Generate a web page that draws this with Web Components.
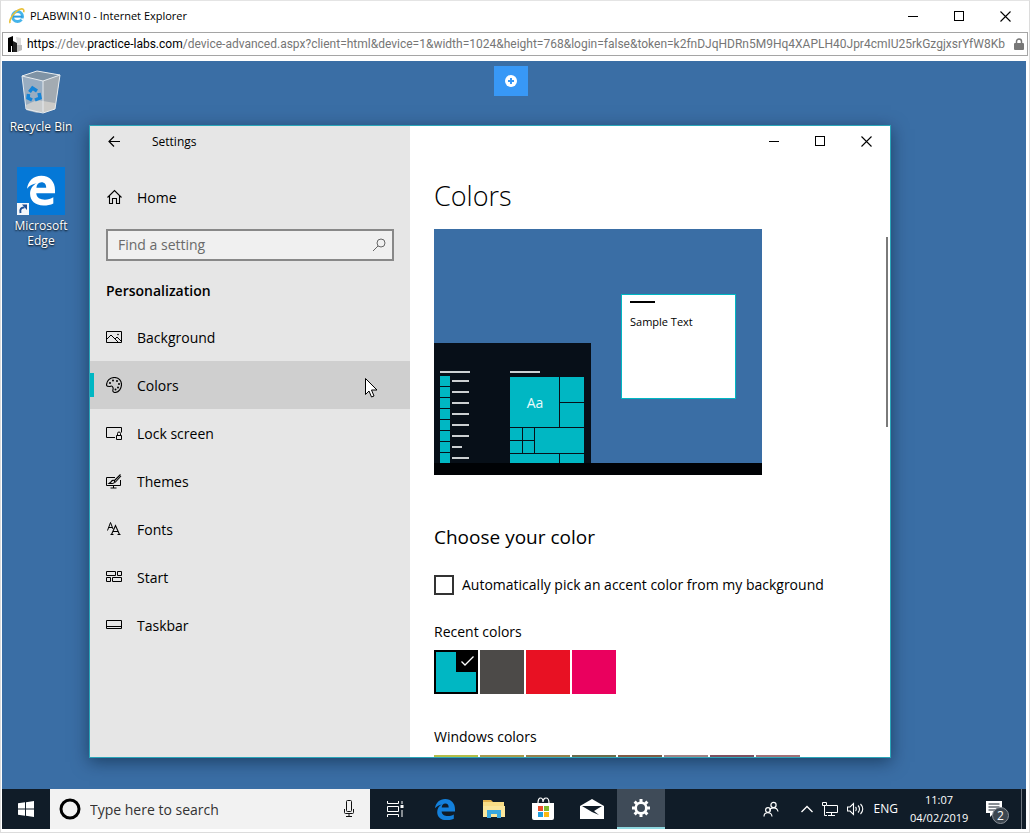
<!DOCTYPE html>
<html lang="en">
<head>
<meta charset="utf-8">
<title>PLABWIN10 - Internet Explorer</title>
<style>
  html, body { height: 100%; margin: 0; }
  body { font: 14px/20px "Open Sans", "Noto Sans", sans-serif; color: #000; background: #fff; overflow: hidden; }
</style>
</head>
<body>
<browser-window></browser-window>

<script>
const ICONS = {
  ie: [16, 16, `<circle cx="8.5" cy="8.5" r="5" fill="none" stroke="#45b4ea" stroke-width="3"/><path d="M4 8.6h9.5" stroke="#2a9be0" stroke-width="2"/><path d="M11 10.5h4l-1 2z" fill="#fff"/><path d="M1.2 15C-.6 12.500 5 3.500 11 1.200c3-1 4.500.3 3.600 3" fill="none" stroke="#e9c13b" stroke-width="1.600"/>`],
  site: [16, 16, `<path d="M1 2l5-2v16H1z" fill="#000"/><path d="M6 5l4 2v9H6z" fill="#222"/><path d="M4 10h1v6H4z" fill="#fff"/><path d="M9 1l5 1v12l-4 2V7z" fill="#dcdcdc"/><path d="M10 9h5v5l-5 2z" fill="#bbb"/>`],
  lock: [10, 12, `<path d="M2.500 6V3.500a2.500 2.500 0 015 0V6" fill="none" stroke="#777" stroke-width="1.500"/><rect y="5" width="10" height="7" rx="1" fill="#777"/>`],
  min: [11, 11, `<path d="M0 5.500h10" stroke="#000"/>`],
  max: [11, 11, `<rect x=".5" y=".5" width="9" height="9" fill="none" stroke="#000"/>`],
  close: [11, 11, `<path d="M.5.5l10 10M10.500.5l-10 10" stroke="#000" stroke-width="1.100"/>`],
  plus: [12, 12, `<circle cx="6" cy="6" r="6" fill="#fff"/><path d="M6 3v6M3 6h6" stroke="#3898f6" stroke-width="2"/>`],
  bin: [48, 48, `<path d="M5 8l15-5 23 4-5 34-18 4-11-3z" fill="#b9c3cb" fill-opacity=".75"/><path d="M5 8l15-5 23 4-17 6z" fill="#7f93a5"/><path d="M26 13l17-6-5 34-12 4z" fill="#a3abb2"/><path d="M9 37l11-5 18 3v6l-12 4-16-3z" fill="#ddd9d2" fill-opacity=".7"/><path d="M5 8l15-5 23 4-17 6zM5 8l4 33 17 4 12-4 5-34M26 13v31" fill="none" stroke="#e6ebef"/><g fill="none" stroke="#1684d6" stroke-width="3.500"><path d="M12.500 24l3-4 4.500 3"/><path d="M22 25l1 5-5 2"/><path d="M15 32l-4-2 .5-4"/></g>`],
  edgeTile: [48, 48, `<rect width="48" height="48" fill="#0478d7"/><svg x="10" y="8" width="28" height="31" viewBox="0 0 20 21"><path fill="#fff" d="M0 9.300C.7 3.700 4.700 0 10.200 0 16.300 0 20 4.300 20 10.200v2.300H6.600c.2 3.200 3 4.600 6.200 4.600 2.200 0 4.300-.7 6-1.700v4.300c-2 1-4.300 1.500-7 1.500-6 0-9.600-3.300-9.600-8.300 0-3.300 1.700-6 4.700-7.500C4.300 5.800 1.700 7 0 9.300zM6.700 8.500h7c0-2.400-1.100-3.900-3.400-3.900-2 0-3.400 1.500-3.600 3.900z"/></svg><rect y="36" width="12" height="12" fill="#f3f6fa"/><path d="M3.500 46c-1-4 1-6 4-5.500" fill="none" stroke="#1d4f96" stroke-width="2"/><path d="M5 37.500h5v5.500z" fill="#1d4f96"/>`],
  back: [12, 12, `<path d="M12 5.500H1M6 .5l-5 5 5 5" fill="none" stroke="#000" stroke-width="1.200"/>`],
  home: [16, 16, `<path d="M1.500 8.500L8.500 1.500l7 7M3.500 7v7.500h3v-5h4v5h3V7" fill="none" stroke="#000" stroke-width="1.100"/>`],
  search: [14, 14, `<circle cx="9" cy="5" r="4" fill="none" stroke="#666"/><path d="M6 8L1 13" stroke="#666"/>`],
  background: [16, 16, `<path d="M.5 2.500h15v11H.5z" fill="none" stroke="#000"/><path d="M1 10l4-4 7 7M9 10l2-2 4 4" fill="none" stroke="#000"/><circle cx="12" cy="5.500" r=".8"/>`],
  colors: [16, 16, `<path d="M3.500 9.500C2.500 9.500.5 9.500.5 8 .5 3.500 4 .5 8.500.5s7 3.500 7 7-2.500 8-6.500 8c-2 0-2.500-1.500-2-3s-.5-3.500-1.500-3.500c-.7 0-1 .5-2 .5z" fill="none" stroke="#000" stroke-width="1.100"/><g><circle cx="4" cy="6" r="1"/><circle cx="7" cy="3.500" r="1"/><circle cx="11" cy="4" r="1"/><circle cx="13" cy="7" r="1"/><circle cx="12" cy="10.500" r="1"/><circle cx="9.500" cy="12.500" r="1"/></g>`],
  lockscreen: [16, 16, `<path d="M9 12.500H.5v-10h15v5" fill="none" stroke="#000"/><path d="M10.500 10.500h5v4h-5zM11.500 10V8.500a1.500 1.500 0 013 0V10" fill="none" stroke="#000"/>`],
  themes: [16, 16, `<path d="M9 4.500H.5v8h14V7M7.500 13v2M4.500 15h6" fill="none" stroke="#000"/><path d="M14.500 1.500L8 8M15 3L9 9.500M3 10.500h3c1.500 0 3-1 2.500-2.500S5.500 7.500 5 9z" fill="none" stroke="#000" stroke-width="1.100"/>`],
  start: [16, 16, `<path d="M.5 2.500h9v4h-9zM11.500 2.500h4v4h-4zM.5 8.500h4v4h-4zM6.500 8.500h9v4h-9z" fill="none" stroke="#000"/>`],
  taskbar: [16, 16, `<path d="M.5 3.500h15v8H.5zM1 9.500h14" fill="none" stroke="#000"/>`],
  fonts: [16, 16, `<path d="M1.500 9.500L4.500 1.500 7 8M2.500 6.500h3.500" fill="none" stroke="#000"/><path d="M5.500 13.500L9.500 4.500l4 9M7 10.500h5M4.500 13.500h3M11.500 13.500h3" fill="none" stroke="#000" stroke-width="1.100"/>`],
  cursor: [13, 20, `<path d="M.5.5v16l3.500-3.500 2.500 6 2.500-1-2.500-6H12z" fill="#fff" stroke="#000"/>`],
  windows: [16, 16, `<path fill="#fff" d="M0 2.300l7-1v6.200H0zM8 1.200L16 0v7.500H8zM0 8.500h7v6.200l-7-1zM8 8.500h8V16l-8-1.200z"/>`],
  cortana: [22, 22, `<circle cx="11" cy="11" r="9" fill="none" stroke="#000" stroke-width="3"/>`],
  mic: [12, 18, `<rect x="3.500" y=".5" width="5" height="11" rx="1" fill="none" stroke="#111"/><path d="M1.500 9v3.500a1 1 0 001 1h7a1 1 0 001-1V9M6 14v3M3 16.500h6" fill="none" stroke="#111"/>`],
  taskview: [18, 16, `<path d="M.5 0v2.500h11V0M.5 16v-2.500h11V16M.5 5.500h11v5H.5zM15 0v3M15 9v7" fill="none" stroke="#fff"/><rect x="13.500" y="4" width="3" height="3" fill="#fff"/>`],
  edge: [20, 21, `<path fill="#1380dc" d="M0 9.300C.7 3.700 4.700 0 10.200 0 16.300 0 20 4.300 20 10.200v2.300H6.600c.2 3.200 3 4.600 6.200 4.600 2.200 0 4.300-.7 6-1.700v4.300c-2 1-4.300 1.500-7 1.500-6 0-9.600-3.300-9.600-8.300 0-3.300 1.700-6 4.700-7.500C4.300 5.800 1.700 7 0 9.300zM6.700 8.500h7c0-2.400-1.100-3.900-3.400-3.900-2 0-3.400 1.500-3.600 3.900z"/>`],
  folder: [22, 20, `<path d="M0 1h8l2 2h10v2H0z" fill="#e3b24d"/><path d="M0 3h21v15H0z" fill="#f9dd86"/><path d="M0 7h22v11H0z" fill="#fbe69b"/><path d="M4 11h14v8h-4v-4H8v4H4z" fill="#39a7df"/>`],
  store: [24, 24, `<path d="M7 6c0-7 5-6 5-1 0-5 6-6 6 1" fill="none" stroke="#fff" stroke-width="1.200"/><path d="M1 6h22v15a2 2 0 01-2 2H3a2 2 0 01-2-2z" fill="#fff"/><path fill="#e94e2c" d="M7 9h5v5H7z"/><path fill="#7fba2c" d="M13 9h5v5h-5z"/><path fill="#219fe0" d="M7 15h5v5H7z"/><path fill="#fbb913" d="M13 15h5v5h-5z"/>`],
  mail: [24, 20, `<path d="M0 7l12-7 12 7v13H0z" fill="#fff"/><path d="M2 7h20l-8 5 5 4-7-3z" fill="#101c28"/>`],
  gear: [20, 20, `<circle cx="10" cy="10" r="5.300" fill="none" stroke="#fff" stroke-width="2.600"/><g stroke="#fff" stroke-width="3"><path d="M10 1v3M10 16v3M1 10h3M16 10h3M3.600 3.600l2.200 2.200M14.200 14.200l2.200 2.200M3.600 16.400l2.200-2.200M14.200 5.800l2.200-2.200"/></g>`],
  people: [16, 16, `<g fill="none" stroke="#fff" stroke-width="1.200"><circle cx="10.500" cy="4" r="2.600"/><path d="M6.500 9.500c1-3.500 7.500-4 8.500 1"/><circle cx="5" cy="9" r="2.400"/><path d="M1 15.500c0-5 7.500-5 8 0"/></g>`],
  chevron: [12, 8, `<path d="M.5 7L6 1.500 11.500 7" fill="none" stroke="#fff" stroke-width="1.300"/>`],
  network: [16, 14, `<path d="M5 3.500h10.500v7H4M9.500 11v2.500M6 13.500h7" fill="none" stroke="#fff"/><path d="M.5.500h4v3h-4zM2.500 4v9.500H5" fill="none" stroke="#fff"/>`],
  sound: [18, 14, `<path d="M.5 5H3l3.500-3.500v11L3 9H.5zM8.500 5c1 1 1 3 0 4M11 3.500c2 2 2 5 0 7M13.500 2c3 3 3 7 0 10" fill="none" stroke="#fff" stroke-width="1.100"/>`],
  notes: [16, 16, `<path d="M0 0h16v12H8l-4 4v-4H0z" fill="#fff"/><path d="M2.500 3h11M2.500 6h11M2.500 9h7" stroke="#101c28"/>`],
  check: [13, 10, `<path d="M.5 5.500L4 9l8.500-8.500" fill="none" stroke="#fff" stroke-width="1.300"/>`]
};

/* Registers an element whose open shadow root is cloned from a template. */
function define(name, markup, setup) {
  const template = document.createElement('template');
  template.innerHTML = `<style>*{box-sizing:border-box}:host{box-sizing:border-box}button{border:0;padding:0;margin:0;background:none;font:inherit;color:inherit}input{font:inherit;color:inherit;margin:0;min-width:0}h1,h2,h3{margin:0}</style>` + markup;
  customElements.define(name, class extends HTMLElement {
    constructor() {
      super();
      this.attachShadow({ mode: 'open' }).append(template.content.cloneNode(true));
    }
    connectedCallback() { if (setup) setup(this, this.shadowRoot); }
  });
}

define('ui-icon', `<style>:host{display:block;flex:none}svg{display:block}</style>`, (host, root) => {
  const icon = ICONS[host.getAttribute('name')];
  if (!icon || root.querySelector('svg')) return;
  const [w, h, body] = icon;
  const holder = document.createElement('template');
  holder.innerHTML = `<svg width="${w}" height="${h}" viewBox="0 0 ${w} ${h}" aria-hidden="true">${body}</svg>`;
  root.append(holder.content);
});

define('caption-buttons', `
<style>
  :host{display:flex;height:32px}
  button{width:46px;display:grid;place-items:center;padding:0 1px 1px 0}
</style>
<button aria-label="Minimize"><ui-icon name="min"></ui-icon></button>
<button aria-label="Maximize"><ui-icon name="max"></ui-icon></button>
<button aria-label="Close"><ui-icon name="close"></ui-icon></button>`);

define('address-bar', `
<style>
  :host{display:flex;align-items:center;gap:4px;height:24px;margin:0 1px;padding:0 3px 0 4px;border:1px solid #a5a5a5;font-family:Roboto,"Open Sans",sans-serif;font-size:12px;line-height:20px;color:#767676}
  .url{flex:1;min-width:0;overflow:hidden;white-space:nowrap}
  b{font-weight:400;color:#000}
</style>
<ui-icon name="site"></ui-icon>
<div class="url"><b>https</b>://dev.<b>practice-labs.com</b>/device-advanced.aspx?client=html&amp;device=1&amp;width=1024&amp;height=768&amp;login=false&amp;token=k2fnDJqHDRn5M9Hq4XAPLH40Jpr4cmIU25rkGzgjxsrYfW8Kb</div>
<ui-icon name="lock"></ui-icon>`);

define('desktop-icon', `
<style>
  :host{display:flex;flex-direction:column;align-items:center;gap:3px;width:78px;color:#fff;font-size:12px;line-height:15px;text-align:center;text-shadow:0 1px 2px #000}
</style>
<slot name="icon"></slot><span><slot></slot></span>`);

define('nav-item', `
<style>
  :host{display:block}
  a{display:flex;align-items:center;gap:15px;height:48px;padding-left:16px;color:#000;text-decoration:none}
  span{padding-top:2px}
  :host([selected]) a{background:linear-gradient(#00b7c3,#00b7c3) 0 50%/4px 24px no-repeat #cfcfcf}
</style>
<a href="#"><span><slot></slot></span></a>`, (host, root) => {
  const link = root.querySelector('a');
  if (link.querySelector('ui-icon')) return;
  const icon = document.createElement('ui-icon');
  icon.setAttribute('name', host.getAttribute('icon'));
  link.prepend(icon);
});

define('color-swatch', `
<style>
  :host{display:grid;width:44px;height:44px}
  input,ui-icon{grid-area:1/1}
  input{appearance:none;width:44px;height:44px;background:var(--swatch)}
  input:checked{border:2px solid #000}
  ui-icon{display:none;justify-self:end;align-self:start;width:22px;height:22px;padding:6px 5px;background:#000}
  :host([checked]) ui-icon{display:block}
</style>
<input type="radio"><ui-icon name="check"></ui-icon>`, (host, root) => {
  const input = root.querySelector('input');
  host.style.setProperty('--swatch', host.getAttribute('color'));
  input.setAttribute('aria-label', host.getAttribute('label'));
  input.checked = host.hasAttribute('checked');
});

define('color-preview', `
<style>
  :host{display:flex;flex-direction:column;justify-content:flex-end;position:relative;width:328px;height:246px;background:#3a6ea5}
  svg{display:block}
  .bar{height:12px;background:#000205}
  .sample{position:absolute;left:187px;top:65px;width:115px;height:105px;padding:6px 8px;background:#fff;border:1px solid #00b7c3;font-size:11px;line-height:16px}
  .sample i{display:block;width:25px;height:2px;margin-bottom:11px;background:#000}
  text{font-size:14px;fill:#e8fbfc}
</style>
<div class="sample"><i></i>Sample Text</div>
<svg width="157" height="120" viewBox="0 0 157 120"><rect width="157" height="120" fill="#070f18"/>
<path d="M6 29h30M76 29h30M18 38h17M18 49h17M18 60h17M18 71h17M18 82h17M18 93h17M18 104h10M18 115h17" stroke="#ccd0d2" stroke-width="2"/>
<path fill="#00b7c3" d="M6 33h10v10H6zM6 44h10v10H6zM6 55h10v10H6zM6 66h10v10H6zM6 77h10v10H6zM6 88h10v10H6zM6 99h10v10H6zM6 110h10v10H6zM76 34h49v50H76zM126 34h24v25h-24zM126 60h24v24h-24zM76 85h12v12H76zM89 85h11v12H89zM76 98h12v12H76zM89 98h11v12H89zM101 85h49v25h-49zM76 111h49v9H76zM126 111h24v9h-24z"/>
<text x="101" y="65" text-anchor="middle">Aa</text></svg>
<div class="bar"></div>`);

define('settings-window', `
<style>
  :host{display:grid;grid-template-columns:320px 1fr;position:relative;min-height:0;overflow:hidden;background:#fff;border:1px solid #2aa5b8;box-shadow:0 4px 16px rgba(0,20,40,.5)}
  aside{background:#e6e6e6;overflow:hidden}
  .title{display:flex;align-items:center;height:32px;padding-left:18px;gap:32px;font-size:12px;margin-bottom:15px}
  .find{display:flex;align-items:center;height:32px;margin:8px 16px 0;border:2px solid #888;background:#f0f0f0;padding:0 6px 0 10px}
  .find input{flex:1;border:0;padding:0 0 2px;background:none;outline:0;height:24px}
  .find input::placeholder{color:#6a6a6a;opacity:1}
  aside h2{font-size:14px;line-height:44px;font-weight:600;padding:8px 0 0 16px}
  main{display:flex;flex-direction:column;overflow:hidden;min-width:0}
  caption-buttons{align-self:flex-end;flex:none}
  .content{flex:1;min-height:0;overflow:hidden;padding:20px 2px 0 24px;display:grid;grid-template-columns:1fr 2px;}
  h1{font-size:27px;line-height:36px;font-weight:300;margin-bottom:15px}
  .content h2{font-size:19px;line-height:28px;font-weight:400;margin:48px 0 24px}
  h3{font-size:14px;line-height:20px;font-weight:400;margin-bottom:8px}
  label{display:flex;align-items:center;gap:8px;height:20px;white-space:nowrap;margin-bottom:27px}
  label input{appearance:none;width:20px;height:20px;border:2px solid #333;background:#fff}
  .row{display:flex;gap:2px;margin-bottom:33px}
  .thumb{margin-top:59px;height:190px;background:#7a7a7a}
  .pointer{position:absolute;left:275px;top:252px}
</style>
<aside>
  <div class="title"><button aria-label="Back"><ui-icon name="back"></ui-icon></button><span>Settings</span></div>
  <nav-item icon="home">Home</nav-item>
  <div class="find"><input type="text" placeholder="Find a setting" aria-label="Find a setting"><ui-icon name="search"></ui-icon></div>
  <h2>Personalization</h2>
  <nav>
    <nav-item icon="background">Background</nav-item>
    <nav-item icon="colors" selected>Colors</nav-item>
    <nav-item icon="lockscreen">Lock screen</nav-item>
    <nav-item icon="themes">Themes</nav-item>
    <nav-item icon="fonts">Fonts</nav-item>
    <nav-item icon="start">Start</nav-item>
    <nav-item icon="taskbar">Taskbar</nav-item>
  </nav>
</aside>
<main>
  <caption-buttons></caption-buttons>
  <div class="content">
    <div>
      <h1>Colors</h1>
      <color-preview></color-preview>
      <h2>Choose your color</h2>
      <label for="auto"><input type="checkbox" id="auto">Automatically pick an accent color from my background</label>
      <h3>Recent colors</h3>
      <div class="row">
        <color-swatch color="#00b7c3" label="Teal" checked></color-swatch>
        <color-swatch color="#4c4a48" label="Gray"></color-swatch>
        <color-swatch color="#e81123" label="Red"></color-swatch>
        <color-swatch color="#ea005e" label="Rose"></color-swatch>
      </div>
      <h3>Windows colors</h3>
      <div class="row">
        <color-swatch color="#b5bd48" label="Yellow gold"></color-swatch>
        <color-swatch color="#a99a4c" label="Gold"></color-swatch>
        <color-swatch color="#95804d" label="Orange bright"></color-swatch>
        <color-swatch color="#6d6a4a" label="Orange dark"></color-swatch>
        <color-swatch color="#7f5a45" label="Rust"></color-swatch>
        <color-swatch color="#a08285" label="Pale rust"></color-swatch>
        <color-swatch color="#7d5060" label="Brick red"></color-swatch>
        <color-swatch color="#a07078" label="Moderate red"></color-swatch>
      </div>
    </div>
    <div class="thumb"></div>
  </div>
</main>
<ui-icon class="pointer" name="cursor"></ui-icon>`);

define('desk-top', `
<style>
  :host{display:grid;grid-template-columns:87px 1fr;grid-template-rows:minmax(0,1fr);position:relative;flex:1;min-height:0;padding:0 135px 31px 0;background:#3a6ea5}
  .icons{display:flex;flex-direction:column;gap:33px;padding-top:7px}
  settings-window{margin-top:64px}
  .more{position:absolute;top:5px;left:calc(50% - 20px);width:34px;height:30px;display:grid;place-items:center;background:#3898f6}
</style>
<div class="icons">
  <desktop-icon><ui-icon slot="icon" name="bin"></ui-icon>Recycle Bin</desktop-icon>
  <desktop-icon><ui-icon slot="icon" name="edgeTile"></ui-icon>Microsoft Edge</desktop-icon>
</div>
<settings-window></settings-window>
<button class="more" aria-label="Session menu"><ui-icon name="plus"></ui-icon></button>`);

define('task-button', `
<style>
  :host{display:flex;width:48px}
  button{flex:1;display:grid;place-items:center}
  :host([active]) button{background:#3f4b58;border-bottom:2px solid #8fd8e0}
</style>
<button><slot></slot></button>`, (host, root) => {
  root.querySelector('button').setAttribute('aria-label', host.getAttribute('label'));
});

define('task-bar', `
<style>
  :host{display:flex;flex:none;height:40px;background:#101c28;color:#fff;font-size:12px;line-height:18px}
  .find{display:flex;align-items:center;gap:9px;width:320px;padding:0 15px 0 9px;background:#f2f2f2;color:#000}
  .find input{flex:1;border:0;padding:0;background:none;outline:0;font-size:14px;height:24px}
  .find input::placeholder{color:#333;opacity:1}
  .apps{display:flex;gap:1px;padding-left:2px}
  .tray{display:flex;align-items:center;margin-left:auto}
  .tray>*{flex:none}
  .people{margin-right:22px}
  .status{display:flex;align-items:center;gap:9px;margin-right:12px}
  .clock{width:58px;font-size:11px;text-align:center}
  .alerts{position:relative;margin:0 19px 0 18px}
  .badge{position:absolute;left:6px;top:6px;width:17px;height:17px;border-radius:50%;background:#3c4650;border:1px solid #8a9098;font-size:12px;line-height:15px;text-align:center}
  .peek{width:5px;height:100%;border-left:1px solid #6c757e}
</style>
<task-button label="Start"><ui-icon name="windows"></ui-icon></task-button>
<div class="find"><ui-icon name="cortana"></ui-icon><input type="text" placeholder="Type here to search" aria-label="Type here to search"><ui-icon name="mic"></ui-icon></div>
<div class="apps">
  <task-button label="Task View"><ui-icon name="taskview"></ui-icon></task-button>
  <task-button label="Microsoft Edge"><ui-icon name="edge"></ui-icon></task-button>
  <task-button label="File Explorer"><ui-icon name="folder"></ui-icon></task-button>
  <task-button label="Store"><ui-icon name="store"></ui-icon></task-button>
  <task-button label="Mail"><ui-icon name="mail"></ui-icon></task-button>
  <task-button label="Settings" active><ui-icon name="gear"></ui-icon></task-button>
</div>
<div class="tray">
  <button class="people" aria-label="People"><ui-icon name="people"></ui-icon></button>
  <div class="status"><ui-icon name="chevron"></ui-icon><ui-icon name="network"></ui-icon><ui-icon name="sound"></ui-icon><span>ENG</span></div>
  <div class="clock">11:07<br>04/02/2019</div>
  <button class="alerts" aria-label="Notifications"><ui-icon name="notes"></ui-icon><span class="badge">2</span></button>
  <div class="peek"></div>
</div>`);

define('browser-window', `
<style>
  :host{display:flex;flex-direction:column;height:100vh;border:1px solid #dcdcdc;border-top-color:#e4e4e4;background:#fff}
  header{display:flex;align-items:center;justify-content:space-between;height:31px;flex:none;font-size:11px}
  .name{display:flex;align-items:center;gap:5px;padding:0 0 2px 8px}
  caption-buttons{height:30px}
  address-bar{flex:none}
  .page{display:flex;flex-direction:column;flex:1;min-height:0;margin:5px 3px 3px 1px}
</style>
<header><div class="name"><ui-icon name="ie"></ui-icon><span>PLABWIN10 - Internet Explorer</span></div><caption-buttons></caption-buttons></header>
<address-bar></address-bar>
<div class="page"><desk-top></desk-top><task-bar></task-bar></div>`);
</script>
</body>
</html>
